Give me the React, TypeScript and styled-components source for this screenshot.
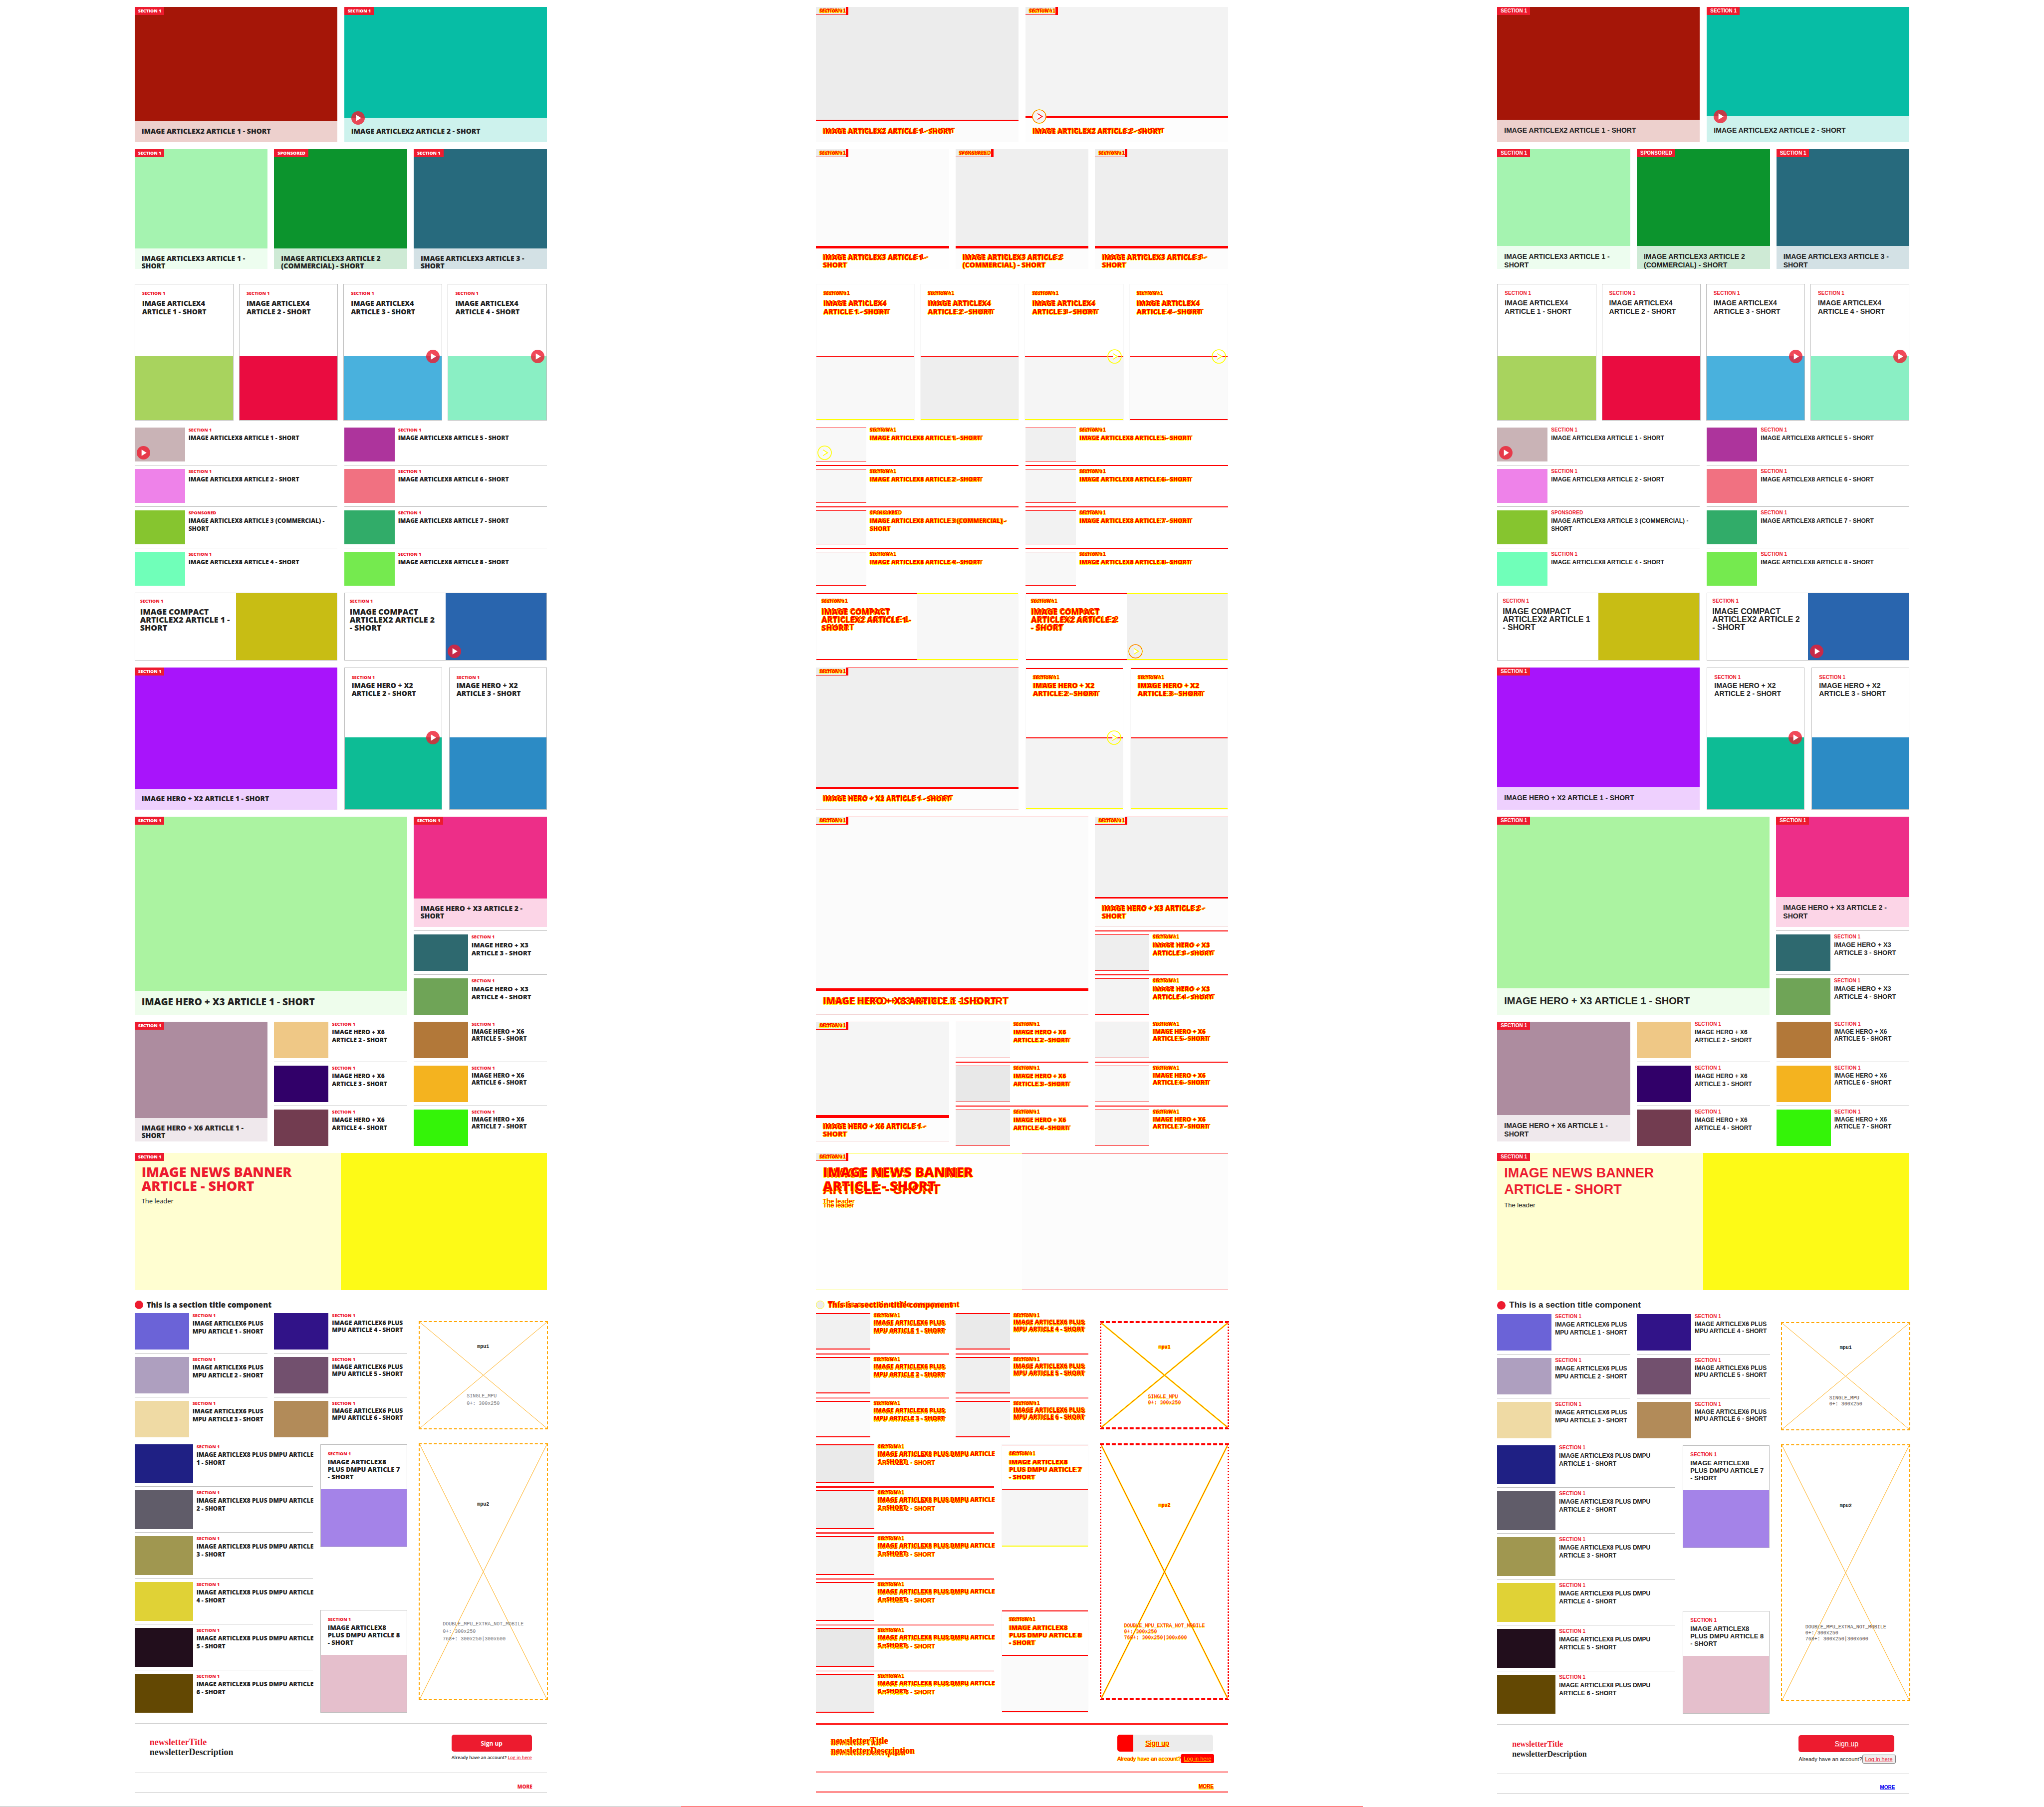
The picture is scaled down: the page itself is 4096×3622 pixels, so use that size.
import React, { useContext } from "react";
import styled, { createGlobalStyle, css, ThemeProvider, ThemeContext } from "styled-components";

type Mode = "before" | "diff" | "after";

const base = {
  brand: "#ed1b2f",
  ink: "#222222",
  rule: "#bbbbbb",
};

const themes: Record<Mode, any> = {
  before: {
    ...base, mode: "before", font: '"Open Sans", sans-serif', weight: 800, label: 9,
    lead: 15, bandPad: 12, heroSize: 19, heroLine: 20, bannerLine: 28, leaderGap: 7,
    titleTop: 18, titleBottom: 6, infoLine: 15, serif: 18, serifTop: 27, copyWeight: 600,
  },
  diff: {
    ...base, mode: "diff", font: '"Liberation Sans", Arial, sans-serif', weight: 700, label: 10,
    lead: 17, bandPad: 13, heroSize: 20, heroLine: 24, bannerLine: 33, leaderGap: 6,
    titleTop: 18, titleBottom: 6, infoLine: 12, serif: 16, serifTop: 28, copyWeight: 400,
  },
  after: {
    ...base, mode: "after", font: '"Liberation Sans", Arial, sans-serif', weight: 700, label: 10,
    lead: 17, bandPad: 13, heroSize: 20, heroLine: 24, bannerLine: 33, leaderGap: 6,
    titleTop: 19, titleBottom: 7, infoLine: 12, serif: 16, serifTop: 29, copyWeight: 400,
  },
};

const isDiff = (p: any) => p.theme.mode === "diff";

/* Unchanged areas of the comparison fade to a tenth of their brightness contrast. */
function faded(hex: string) {
  const n = parseInt(hex.slice(1), 16);
  const y = 0.299 * (n >> 16) + 0.587 * ((n >> 8) & 255) + 0.114 * (n & 255);
  const g = Math.round(255 + (y - 255) * 0.1);
  return `rgb(${g}, ${g}, ${g})`;
}
const fill = (p: any) => (isDiff(p) ? faded(p.$color) : p.$color);

const Global = createGlobalStyle`
  *, *::before, *::after { box-sizing: border-box; }
  body { margin: 0; background: #ffffff; }
  h2, h3, p { margin: 0; }
`;

const changed = css`
  color: #ff0000;
  text-shadow: 1px 0 0 #ffff00, -1px 0 0 #ffff00, 0 1px 0 #ffff00;
`;

/* ---------- page ---------- */
const Page = styled.main`
  display: grid;
  grid-template-columns: repeat(3, 1fr);
  min-height: 100vh;
`;
const Panel = styled.section`
  padding-top: 14px;
  border-bottom: 1px solid ${p => (p.theme.mode === "before" ? "#b0b0b0" : isDiff(p) ? "#ff0000" : "#ffffff")};
  font-family: ${p => p.theme.font};
  color: ${p => p.theme.ink};
`;
const Content = styled.div`
  width: 60.5%;
  margin: 0 auto;
`;
const Stack = styled.div`
  display: flex;
  flex-direction: column;
  gap: 14px;
`;
const Row = styled.div<{ $cols: string; $gap: number; $after?: number }>`
  display: grid;
  grid-template-columns: ${p => p.$cols};
  column-gap: ${p => p.$gap}px;
  margin-bottom: ${p => p.$after || 0}px;
  align-items: stretch;
`;
const Column = styled.div<{ $spread?: boolean }>`
  display: flex;
  flex-direction: column;
  justify-content: ${p => (p.$spread ? "space-between" : "flex-start")};
  min-width: 0;
`;

/* ---------- text ---------- */
const Overlay = styled.span`
  display: block;
  position: relative;
`;
const Ghost = styled.span<{ $size?: number; $line?: number; $weight?: number; $shift?: number }>`
  position: absolute;
  top: ${p => p.$shift || 0}px;
  left: 0;
  white-space: pre;
  font-family: "Open Sans", sans-serif;
  font-weight: ${p => p.$weight || 800};
  font-size: ${p => (p.$size ? p.$size + "px" : "inherit")};
  line-height: ${p => (p.$line ? p.$line + "px" : "inherit")};
`;
const GhostSerif = styled(Ghost)`
  font-family: "Liberation Serif", serif;
`;

type WordsProps = { text: string; before?: string; size?: number; line?: number; weight?: number; shift?: number };
function Words({ text, before, size, line, weight, shift }: WordsProps) {
  const theme: any = useContext(ThemeContext as any);
  if (theme.mode === "before") return <>{before || text}</>;
  if (theme.mode === "after") return <>{text}</>;
  return (
    <Overlay>
      {text}
      <Ghost aria-hidden="true" $size={size} $line={line} $weight={weight} $shift={shift}>{before || text}</Ghost>
    </Overlay>
  );
}

const LabelText = styled.p`
  font-size: ${p => p.theme.label}px;
  line-height: 9px;
  font-weight: ${p => p.theme.weight};
  color: ${p => p.theme.brand};
  white-space: nowrap;
  ${p => isDiff(p) && changed}
`;
const Title = styled.h3<{ $size: number; $line: number; $gap?: number }>`
  margin-top: ${p => p.$gap || 0}px;
  font-size: ${p => p.$size}px;
  line-height: ${p => p.$line}px;
  font-weight: ${p => p.theme.weight};
  white-space: pre;
  ${p => isDiff(p) && changed}
`;

/* ---------- play badge ---------- */
const Badge = styled.svg<{ $at: "band" | "edge" | "corner" }>`
  position: absolute;
  width: 27px;
  height: 27px;
  overflow: visible;
  ${p => p.$at === "band" && "left: 14px; top: -13px;"}
  ${p => p.$at === "edge" && "right: 4px; top: -13px;"}
  ${p => p.$at === "corner" && "left: 4px; bottom: 4px;"}
`;
function Play({ at, strong }: { at: "band" | "edge" | "corner"; strong?: boolean }) {
  const theme: any = useContext(ThemeContext as any);
  if (theme.mode === "diff") {
    const line = at === "band" ? "#ff0000" : "#ffff00";
    return (
      <Badge $at={at} viewBox="0 0 32 32">
        <circle cx="16" cy="16" r="16" fill={at === "band" ? "#f4f4f4" : "none"} stroke="#ffff00" strokeWidth="2" />
        {(at === "band" || strong) && <circle cx="16" cy="16" r="16" fill="none" stroke="#ff0000" strokeWidth="1" />}
        <path d="M12 9v14l11-7z" fill="#ffffff" />
        <path d="M12 9l11 7-11 7" fill="none" stroke={line} strokeWidth="2" />
      </Badge>
    );
  }
  return (
    <Badge $at={at} viewBox="0 0 32 32">
      <circle cx="16" cy="16" r="16" fill="#ed1b2f" fillOpacity="0.8" />
      <path d="M11.5 8.5v15l12-7.5z" fill="#ffffff" />
    </Badge>
  );
}

/* ---------- teaser with a translucent title band ---------- */
const Hero = styled.article<{ $color: string; $height?: number; $edged?: boolean }>`
  display: flex;
  flex-direction: column;
  justify-content: space-between;
  align-items: stretch;
  flex: ${p => (p.$height ? "none" : "1")};
  height: ${p => (p.$height ? p.$height + "px" : "auto")};
  background: ${fill};
  ${p => isDiff(p) && p.$edged && "box-shadow: inset 0 1px 0 #ff0000, inset 0 -1px 0 #c03030;"}
`;
const Tag = styled.p`
  align-self: flex-start;
  padding: 0 6px 0 7px;
  height: 16px;
  font-size: ${p => p.theme.label}px;
  line-height: ${p => (p.theme.mode === "before" ? 16 : 15)}px;
  font-weight: ${p => p.theme.weight};
  color: #ffffff;
  background: ${p => p.theme.brand};
  white-space: nowrap;
  ${p => isDiff(p) && css`
    background: #ececec;
    border-right: 5px solid #ff0000;
    border-bottom: 1px solid #ff0000;
    padding-right: 0;
    ${changed}
  `}
`;
const Band = styled.div<{ $h: number; $mark: number; $play?: boolean }>`
  position: relative;
  height: ${p => p.$h}px;
  padding: ${p => p.theme.bandPad + (p.$play ? 7 : 0)}px 14px 0;
  background: rgba(255, 255, 255, 0.8);
  ${p => isDiff(p) && `box-shadow: inset 0 ${p.$mark}px 0 #ff0000;`}
`;

type HeroProps = {
  color: string; title: string; tag?: string; height?: number;
  bands: [number, number]; play?: boolean; big?: boolean; edged?: boolean;
};
function HeroTeaser({ color, title, tag = "SECTION 1", height, bands, play, big, edged }: HeroProps) {
  const theme: any = useContext(ThemeContext as any);
  const h = theme.mode === "before" ? bands[0] : bands[1];
  return (
    <Hero $color={color} $height={height} $edged={edged}>
      <Tag><Words text={tag} size={9} /></Tag>
      <Band $h={h} $mark={bands[1] - bands[0]} $play={play}>
        {play && <Play at="band" />}
        <Title $size={big ? theme.heroSize : 14} $line={big ? theme.heroLine : theme.lead}>
          <Words text={title} size={big ? 19 : 14} line={big ? 24 : 15} shift={big ? 0 : 2} />
        </Title>
      </Band>
    </Hero>
  );
}

/* ---------- bordered card, text above picture ---------- */
const Card = styled.article<{ $height: number }>`
  display: flex;
  flex-direction: column;
  height: ${p => p.$height}px;
  border: 1px solid ${p => (isDiff(p) ? "#f6f6f6" : p.theme.rule)};
`;
const CardText = styled.div<{ $h: number; $top: number; $mark?: number }>`
  height: ${p => p.$h}px;
  padding: ${p => p.$top}px 0 0 14px;
  ${p => isDiff(p) && p.$mark && `box-shadow: inset 0 ${p.$mark}px 0 #ff0000;`}
`;
const CardImage = styled.div<{ $color: string; $top?: number; $bottom?: string }>`
  position: relative;
  flex: 1;
  background: ${fill};
  ${p => isDiff(p) && `box-shadow: inset 0 ${p.$top || 1}px 0 #ff0000, inset 0 -2px 0 ${p.$bottom || "#ffff00"};`}
`;
type CardProps = {
  color: string; title: string; height: number; textHeight: number; top: number;
  gap: number; size: number; line: number; play?: boolean; mark?: number; imageMark?: number; bottom?: string;
};
function CardTeaser(c: CardProps) {
  return (
    <Card $height={c.height}>
      <CardText $h={c.textHeight} $top={c.top} $mark={c.mark}>
        <LabelText><Words text="SECTION 1" size={9} /></LabelText>
        <Title $size={c.size} $line={c.line} $gap={c.gap}><Words text={c.title} /></Title>
      </CardText>
      <CardImage $color={c.color} $top={c.imageMark} $bottom={c.bottom}>{c.play && <Play at="edge" />}</CardImage>
    </Card>
  );
}

/* ---------- compact card, text beside picture ---------- */
const Compact = styled.article`
  display: grid;
  grid-template-columns: 1fr 1fr;
  height: 136px;
  border: 1px solid ${p => (isDiff(p) ? "#f6f6f6" : p.theme.rule)};
`;
const CompactText = styled.div`
  padding: 11px 0 0 10px;
  ${p => isDiff(p) && "box-shadow: inset 0 2px 0 #ff0000, inset 0 -2px 0 #ff0000;"}
`;
const CompactImage = styled.div<{ $color: string }>`
  position: relative;
  background: ${fill};
  ${p => isDiff(p) && "box-shadow: inset 0 2px 0 #ffff00, inset 0 -2px 0 #ffff00;"}
`;
function CompactTeaser({ color, title, before, play }: { color: string; title: string; before?: string; play?: boolean }) {
  return (
    <Compact>
      <CompactText>
        <LabelText><Words text="SECTION 1" size={9} /></LabelText>
        <Title $size={16} $line={16} $gap={9}><Words text={title} before={before} /></Title>
      </CompactText>
      <CompactImage $color={color}>{play && <Play at="corner" strong />}</CompactImage>
    </Compact>
  );
}

/* ---------- list item, thumbnail and text ---------- */
const List = styled.ul<{ $pad: number; $lead?: boolean; $double?: boolean }>`
  list-style: none;
  margin: 0;
  padding: 0;
  & > li + li, & > li:first-child {
    padding-top: 7px;
    margin-top: ${p => p.$pad}px;
    border-top: 1px solid ${p => p.theme.rule};
    ${p => isDiff(p) && !p.$double && `border-top: 2px solid #ff0000; padding-top: 6px;`}
    ${p => isDiff(p) && p.$double && `border-top: 3px double #ff0000; padding-top: 5px;`}
  }
  ${p => !p.$lead && "& > li:first-child { padding-top: 0; margin-top: 0; border-top: none; }"}
`;
const Item = styled.li`
  display: flex;
  gap: 7px;
`;
const Thumb = styled.div<{ $color: string; $w: number; $h: number; $mark: number }>`
  position: relative;
  flex: none;
  width: ${p => p.$w}px;
  height: ${p => p.$h}px;
  background: ${fill};
  ${p => isDiff(p) && `box-shadow: inset 0 ${p.$mark}px 0 #ff0000, inset 0 -${p.$mark}px 0 #ff0000;`}
`;
type Entry = { color: string; title: string; before?: string; label?: string; play?: boolean };
type ListProps = {
  items: Entry[]; w: number; h: number; size?: number; line?: number;
  pad?: number; lead?: boolean; double?: boolean;
};
function ListTeasers({ items, w, h, size = 12, line = 16, pad = 7, lead, double }: ListProps) {
  return (
    <List $pad={pad} $lead={lead} $double={double}>
      {items.map(i => (
        <Item key={i.title}>
          <Thumb $color={i.color} $w={w} $h={h} $mark={double ? 2 : 1}>{i.play && <Play at="corner" />}</Thumb>
          <div>
            <LabelText><Words text={i.label || "SECTION 1"} size={9} /></LabelText>
            <Title $size={size} $line={line} $gap={4}>
              <Words text={i.title} before={i.before} shift={double ? -2 : 0} />
            </Title>
          </div>
        </Item>
      ))}
    </List>
  );
}

/* ---------- news banner ---------- */
const Banner = styled.article`
  display: grid;
  grid-template-columns: 1fr 1fr;
  height: 275px;
`;
const BannerText = styled.div`
  background: ${p => (isDiff(p) ? "#fefefe" : "#fffed1")};
  ${p => isDiff(p) && "box-shadow: inset 0 1px 0 #ffff00, inset 0 -1px 0 #ffff00;"}
`;
const BannerCopy = styled.div`
  padding: 8px 14px 0;
`;
const BannerTitle = styled.h2`
  font-size: 27px;
  line-height: ${p => p.theme.bannerLine}px;
  font-weight: ${p => p.theme.weight};
  color: ${p => p.theme.brand};
  white-space: pre;
  ${p => isDiff(p) && changed}
`;
const Leader = styled.p`
  margin-top: ${p => p.theme.leaderGap}px;
  font-size: 13px;
  line-height: 18px;
  ${p => isDiff(p) && changed}
`;
const BannerImage = styled.div<{ $color: string }>`
  background: ${fill};
  ${p => isDiff(p) && "box-shadow: inset 0 1px 0 #ff0000, inset 0 -1px 0 #ff0000;"}
`;

/* ---------- section title ---------- */
const SectionTitle = styled.h2`
  display: flex;
  align-items: center;
  gap: 7px;
  padding: ${p => p.theme.titleTop}px 0 ${p => p.theme.titleBottom}px;
  font-size: ${p => (p.theme.mode === "before" ? 15 : 17)}px;
  line-height: 22px;
  font-weight: ${p => p.theme.weight};
  ${p => isDiff(p) && changed}
`;
const Dot = styled.span`
  width: 17px;
  height: 17px;
  border-radius: 50%;
  background: ${p => p.theme.brand};
  ${p => isDiff(p) && "background: #ececec; border: 1px solid #ffff00;"}
`;

/* ---------- advert slots ---------- */
const Advert = styled.aside<{ $h: number; $top: number }>`
  position: relative;
  justify-self: end;
  display: flex;
  flex-direction: column;
  align-items: center;
  justify-content: space-around;
  width: 259px;
  height: ${p => p.$h}px;
  margin: ${p => p.$top}px -2px 0 0;
  border: 2px dashed #ffa500;
  font-family: "Liberation Mono", monospace;
  font-size: 10px;
  line-height: ${p => p.theme.infoLine}px;
  ${p => isDiff(p) && "border: 3px dotted #ff0000; border-top: 4px dashed #ff0000; border-bottom: 4px dashed #ff0000;"}
`;
const Cross = styled.svg`
  position: absolute;
  inset: 0;
  width: 100%;
  height: 100%;
`;
const AdName = styled.strong`
  position: relative;
  ${p => isDiff(p) && changed}
`;
const AdInfo = styled.p`
  position: relative;
  color: ${p => (p.theme.mode === "before" ? "#777777" : "#555555")};
  white-space: pre;
  ${p => isDiff(p) && "color: #ff3300; text-shadow: 0 2px 0 #ffee00;"}
`;
function AdSlot({ name, info, h, top }: { name: string; info: string; h: number; top: number }) {
  const theme: any = useContext(ThemeContext as any);
  const strokes: [string, number][] = theme.mode === "diff" ? [["#ffff00", 3], ["#ff0000", 1]] : [["#ffa500", 1]];
  return (
    <Advert $h={h} $top={top}>
      <Cross aria-hidden="true">
        {strokes.map(([c, w]) => (
          <g key={c} stroke={c} strokeWidth={w}>
            <line x1="0" y1="0" x2="100%" y2="100%" />
            <line x1="100%" y1="0" x2="0" y2="100%" />
          </g>
        ))}
      </Cross>
      <AdName>{name}</AdName>
      <AdInfo>{info}</AdInfo>
    </Advert>
  );
}

/* ---------- newsletter and footer ---------- */
const ruleLine = (p: any) => (isDiff(p) ? "3px double #ff0000" : "1px solid #cccccc");
const Newsletter = styled.section`
  display: flex;
  justify-content: space-between;
  height: 100px;
  margin-top: 21px;
  padding: 0 30px;
  border-top: ${ruleLine};
  border-bottom: ${ruleLine};
`;
const Pitch = styled.div`
  padding-top: ${p => p.theme.serifTop - (isDiff(p) ? 2 : 0)}px;
  font-family: "Liberation Serif", serif;
  font-size: ${p => p.theme.serif}px;
  line-height: 20px;
  font-weight: 700;
`;
const PitchLine = styled.p<{ $brand?: boolean }>`
  position: relative;
  color: ${p => (p.$brand ? p.theme.brand : p.theme.ink)};
  ${p => isDiff(p) && changed}
`;
const Join = styled.div`
  display: flex;
  flex-direction: column;
  width: ${p => (p.theme.mode === "before" ? 161 : 192)}px;
  padding-top: ${p => (p.theme.mode === "before" ? 22 : isDiff(p) ? 20 : 21)}px;
  font-size: ${p => (p.theme.mode === "before" ? 9 : 11)}px;
`;
const SignUp = styled.button`
  height: 34px;
  padding: 0;
  border: none;
  border-radius: 5px;
  background: ${p => p.theme.brand};
  color: #ffffff;
  font-family: inherit;
  font-weight: ${p => (p.theme.mode === "before" ? 700 : 400)};
  font-size: ${p => (p.theme.mode === "before" ? 12 : 14)}px;
  text-decoration: ${p => (p.theme.mode === "before" ? "none" : "underline")};
  ${p => isDiff(p) && css`
    padding-right: 32px;
    background: linear-gradient(to right, #ff0000 32px, #ececec 32px);
    ${changed}
  `}
`;
const Account = styled.div`
  display: flex;
  justify-content: space-between;
  align-items: center;
  height: 22px;
  margin-top: ${p => (p.theme.mode === "before" ? 0 : 3)}px;
  font-weight: ${p => p.theme.copyWeight};
  white-space: nowrap;
  ${p => isDiff(p) && changed}
`;
const LogInLink = styled.a`
  color: ${p => p.theme.brand};
`;
const LogInButton = styled.button`
  height: 18px;
  padding: 0 5px;
  border: 1px solid #767676;
  border-radius: 3px;
  background: #efefef;
  color: ${p => p.theme.brand};
  font: inherit;
  text-decoration: underline;
  ${p => isDiff(p) && "background: #ff0000; border-color: #ff0000; color: #ffcc00;"}
`;
const Footer = styled.footer`
  display: flex;
  justify-content: flex-end;
  height: 40px;
  padding: 18px 29px 0;
  border-bottom: ${p => (isDiff(p) ? "3px double #ff0000" : "1px solid #b8b8b8")};
`;
const More = styled.a`
  font-size: 10px;
  line-height: 18px;
  font-weight: ${p => p.theme.weight};
  color: ${p => (p.theme.mode === "after" ? "#0000ee" : p.theme.brand)};
  text-decoration: ${p => (p.theme.mode === "before" ? "none" : "underline")};
  ${p => isDiff(p) && changed}
`;

/* ---------- data ---------- */
const x8Left: Entry[] = [
  { color: "#c9b3b6", title: "IMAGE ARTICLEX8 ARTICLE 1 - SHORT", play: true },
  { color: "#ee82e9", title: "IMAGE ARTICLEX8 ARTICLE 2 - SHORT" },
  { color: "#86c52f", title: "IMAGE ARTICLEX8 ARTICLE 3 (COMMERCIAL) -\nSHORT", label: "SPONSORED" },
  { color: "#70ffb9", title: "IMAGE ARTICLEX8 ARTICLE 4 - SHORT" },
];
const numbered = (head: string, colors: string[], first: number): Entry[] =>
  colors.map((color, i) => ({ color, title: `${head} ${first + i} - SHORT` }));
const x4 = ["#a8d35e", "#ea0c40", "#49b1dd", "#8aefc4"];
const dmpu: Entry[] = ["#1f2084", "#605c69", "#a09750", "#e0d236", "#220e1c", "#634803"].map((color, i) => ({
  color,
  title: `IMAGE ARTICLEX8 PLUS DMPU\nARTICLE ${i + 1} - SHORT`,
  before: `IMAGE ARTICLEX8 PLUS DMPU ARTICLE\n${i + 1} - SHORT`,
}));

const THREE = "repeat(3, minmax(0, 1fr))";
const TWO = "repeat(2, minmax(0, 1fr))";

function Snapshot({ mode }: { mode: Mode }) {
  const diff = mode === "diff";
  return (
    <ThemeProvider theme={themes[mode]}>
      <Panel>
        <Content>
          <Stack>
            <Row $cols={TWO} $gap={14}>
              <HeroTeaser color="#a51608" title="IMAGE ARTICLEX2 ARTICLE 1 - SHORT" height={271} bands={[42, 45]} />
              <HeroTeaser color="#07bda5" title="IMAGE ARTICLEX2 ARTICLE 2 - SHORT" height={271} bands={[49, 52]} play />
            </Row>
            <Row $cols={THREE} $gap={13} $after={16}>
              <HeroTeaser color="#a5f3b0" title={"IMAGE ARTICLEX3 ARTICLE 1 -\nSHORT"} height={240} bands={[41, 46]} />
              <HeroTeaser color="#0c942d" title={"IMAGE ARTICLEX3 ARTICLE 2\n(COMMERCIAL) - SHORT"} tag="SPONSORED" height={240} bands={[41, 46]} />
              <HeroTeaser color="#276a7d" title={"IMAGE ARTICLEX3 ARTICLE 3 -\nSHORT"} height={240} bands={[41, 46]} />
            </Row>
            <Row $cols="repeat(4, minmax(0, 1fr))" $gap={11}>
              {x4.map((color, i) => (
                <CardTeaser key={color} color={color} title={`IMAGE ARTICLEX4\nARTICLE ${i + 1} - SHORT`} height={274} textHeight={144}
                  top={13} gap={7} size={14} line={17} play={i > 1} bottom={i === 3 ? "#ff0000" : "#ffff00"} />
              ))}
            </Row>
            <Row $cols={TWO} $gap={14}>
              <ListTeasers items={x8Left} w={101} h={68} />
              <ListTeasers items={numbered("IMAGE ARTICLEX8 ARTICLE", ["#ad349c", "#f17181", "#31ac69", "#75ea4f"], 5)} w={101} h={68} />
            </Row>
            <Row $cols={TWO} $gap={14}>
              <CompactTeaser color="#c8bd14" title={"IMAGE COMPACT\nARTICLEX2 ARTICLE 1\n- SHORT"} before={"IMAGE COMPACT\nARTICLEX2 ARTICLE 1 -\nSHORT"} />
              <CompactTeaser color="#2965ae" title={"IMAGE COMPACT\nARTICLEX2 ARTICLE 2\n- SHORT"} play />
            </Row>
            <Row $cols={TWO} $gap={14}>
              <HeroTeaser color="#a814fb" title="IMAGE HERO + X2 ARTICLE 1 - SHORT" height={285} bands={[42, 45]} edged />
              <Row $cols={TWO} $gap={14}>
                <CardTeaser color="#0dbc95" title={"IMAGE HERO + X2\nARTICLE 2 - SHORT"} height={285} textHeight={139}
                  top={14} gap={4} size={14} line={16} play mark={2} imageMark={2} />
                <CardTeaser color="#2c8bc5" title={"IMAGE HERO + X2\nARTICLE 3 - SHORT"} height={285} textHeight={139}
                  top={14} gap={4} size={14} line={16} mark={2} imageMark={2} />
              </Row>
            </Row>
            <Row $cols="546fr 267fr" $gap={13}>
              <HeroTeaser color="#abf3a1" title="IMAGE HERO + X3 ARTICLE 1 - SHORT" height={397} bands={[48, 53]} big edged />
              <Column>
                <HeroTeaser color="#ed2e88" title={"IMAGE HERO + X3 ARTICLE 2 -\nSHORT"} bands={[57, 60]} edged />
                <ListTeasers items={numbered("IMAGE HERO + X3\nARTICLE", ["#2e696f", "#6fa457"], 3)} w={109} h={73} size={13} lead />
              </Column>
            </Row>
            <Row $cols={THREE} $gap={13}>
              <HeroTeaser color="#ad8c9f" title={"IMAGE HERO + X6 ARTICLE 1 -\nSHORT"} height={240} bands={[47, 53]} edged />
              <ListTeasers items={numbered("IMAGE HERO + X6\nARTICLE", ["#efc886", "#310069", "#723c50"], 2)} w={109} h={73} />
              <ListTeasers items={numbered("IMAGE HERO + X6\nARTICLE", ["#b27839", "#f4b31f", "#34f408"], 5)} w={109} h={73} line={14} />
            </Row>
            <Banner>
              <BannerText>
                <Column>
                  <Tag><Words text="SECTION 1" size={9} /></Tag>
                  <BannerCopy>
                    <BannerTitle><Words text={"IMAGE NEWS BANNER\nARTICLE - SHORT"} line={28} /></BannerTitle>
                    <Leader><Words text="The leader" weight={400} shift={-9} /></Leader>
                  </BannerCopy>
                </Column>
              </BannerText>
              <BannerImage $color="#fdfa17" />
            </Banner>
          </Stack>
          <SectionTitle><Dot /><Words text="This is a section title component" size={15} /></SectionTitle>
          <Stack>
            <Row $cols={THREE} $gap={13}>
              <ListTeasers items={numbered("IMAGE ARTICLEX6 PLUS\nMPU ARTICLE", ["#6b63d7", "#ae9fbf", "#efdaa4"], 1)} w={109} h={73} double />
              <ListTeasers items={numbered("IMAGE ARTICLEX6 PLUS\nMPU ARTICLE", ["#311388", "#72506e", "#b28b59"], 4)} w={109} h={73} line={14} double />
              <AdSlot name="mpu1" info={"SINGLE_MPU\n0+: 300x250"} h={217} top={16} />
            </Row>
            <Row $cols="546fr 267fr" $gap={13}>
              <Row $cols="minmax(0, 1fr) 174px" $gap={15}>
                <ListTeasers items={dmpu} w={117} h={78} pad={6} double />
                <Column $spread>
                  <CardTeaser color="#a483e8" title={"IMAGE ARTICLEX8\nPLUS DMPU ARTICLE 7\n- SHORT"} height={206} textHeight={89}
                    top={13} gap={5} size={13} line={15} mark={1} />
                  <CardTeaser color="#e5bfcc" title={"IMAGE ARTICLEX8\nPLUS DMPU ARTICLE 8\n- SHORT"} height={206} textHeight={89}
                    top={13} gap={5} size={13} line={15} mark={2} imageMark={2} bottom="#ff0000" />
                </Column>
              </Row>
              <AdSlot name="mpu2" info={"DOUBLE_MPU_EXTRA_NOT_MOBILE\n0+: 300x250\n768+: 300x250|300x600"} h={515} top={-2} />
            </Row>
          </Stack>
          <Newsletter>
            <Pitch>
              <PitchLine $brand>newsletterTitle{diff && <GhostSerif aria-hidden="true" $size={18} $weight={700} $shift={-4}>newsletterTitle</GhostSerif>}</PitchLine>
              <PitchLine>newsletterDescription{diff && <GhostSerif aria-hidden="true" $size={18} $weight={700} $shift={-4}>newsletterDescription</GhostSerif>}</PitchLine>
            </Pitch>
            <Join>
              <SignUp type="button">Sign up</SignUp>
              <Account>
                <span>Already have an account?</span>
                {mode === "before" ? <LogInLink href="#login">Log in here</LogInLink> : <LogInButton type="button">Log in here</LogInButton>}
              </Account>
            </Join>
          </Newsletter>
          <Footer><More href="#more">MORE</More></Footer>
        </Content>
      </Panel>
    </ThemeProvider>
  );
}

export default function App() {
  return (
    <Page>
      <Global />
      <Snapshot mode="before" />
      <Snapshot mode="diff" />
      <Snapshot mode="after" />
    </Page>
  );
}
